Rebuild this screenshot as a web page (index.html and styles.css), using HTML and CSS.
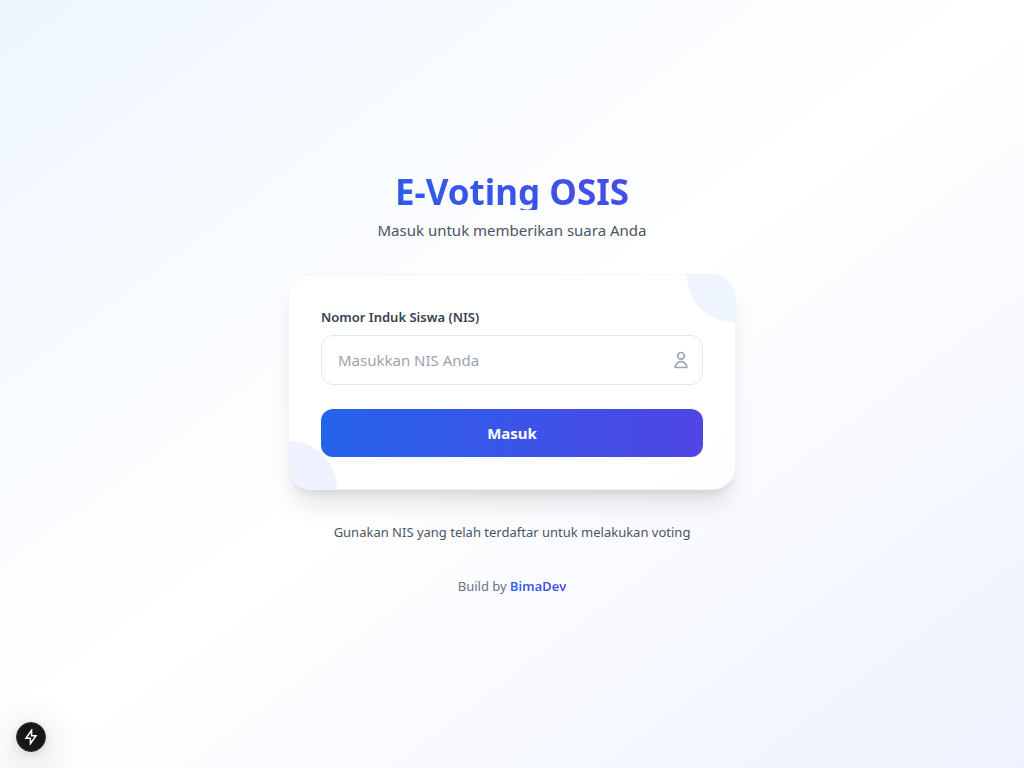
FILE: index.html
```html
<!DOCTYPE html>
<html lang="id">
<head>
<meta charset="utf-8">
<meta name="viewport" content="width=device-width, initial-scale=1">
<title>E-Voting OSIS</title>
<link rel="stylesheet" href="styles.css">
</head>
<body>
<main class="page">
  <div class="login">
    <header class="intro">
      <h1 class="title gradient-text">E-Voting OSIS</h1>
      <p class="subtitle">Masuk untuk memberikan suara Anda</p>
    </header>
    <section class="card">
      <span class="blob blob-top"></span>
      <span class="blob blob-bottom"></span>
      <form class="form">
        <div class="field">
          <label class="label" for="nis">Nomor Induk Siswa (NIS)</label>
          <div class="input-wrap">
            <input class="input" id="nis" type="text" placeholder="Masukkan NIS Anda">
            <svg class="input-icon" viewBox="0 0 24 24" fill="none" stroke="currentColor" stroke-width="2" stroke-linecap="round" stroke-linejoin="round" aria-hidden="true"><path d="M16 7a4 4 0 11-8 0 4 4 0 018 0zM12 14a7 7 0 00-7 7h14a7 7 0 00-7-7z"/></svg>
          </div>
        </div>
        <button class="submit" type="button">Masuk</button>
      </form>
    </section>
    <p class="hint">Gunakan NIS yang telah terdaftar untuk melakukan voting</p>
    <footer class="credit">Build by <a class="credit-link gradient-text" href="#">BimaDev</a></footer>
  </div>
</main>
<button class="dev-button" type="button" aria-label="Route info">
  <svg class="dev-icon" viewBox="0 0 16 16" fill="none" stroke="#fff" stroke-width="1.5" stroke-linejoin="miter" aria-hidden="true"><path d="M8.6 1.2L3 9.2H7.4V14.8L13 6.8H8.6Z"/></svg>
</button>
</body>
</html>
```

FILE: styles.css
```css
*, *::before, *::after { box-sizing: border-box; }
body {
  margin: 0;
  font-family: "Noto Sans", "Open Sans", sans-serif;
  font-size: 15px;
  line-height: 24px;
  color: #4b5563;
}
h1, p { margin: 0; }
button, input { font: inherit; }
.page {
  min-height: 100vh;
  display: flex;
  align-items: center;
  justify-content: center;
  padding: 16px;
  background: linear-gradient(to bottom right, #eff6ff, #ffffff, #eef2ff);
}
.login { width: 100%; max-width: 448px; text-align: center; }
.intro { margin-bottom: 32px; }
.gradient-text {
  background: linear-gradient(to right, #2563eb, #4f46e5);
  background-clip: text;
  -webkit-background-clip: text;
  color: transparent;
}
.title {
  margin-bottom: 8px;
  padding-top: 4px;
  font-size: 35px;
  line-height: 36px;
  font-weight: 700;
}
.card {
  position: relative;
  overflow: hidden;
  padding: 32px;
  border: 1px solid #f3f4f6;
  border-radius: 24px;
  background: rgba(255, 255, 255, 0.8);
  box-shadow: 0 20px 25px -5px rgba(0, 0, 0, 0.1), 0 8px 10px -6px rgba(0, 0, 0, 0.1);
}
.blob {
  position: absolute;
  width: 96px;
  height: 96px;
  border-radius: 50%;
}
.blob-top { top: -48px; right: -48px; background: #eff6ff; }
.blob-bottom { bottom: -48px; left: -48px; background: #eef2ff; }
.form {
  position: relative;
  display: flex;
  flex-direction: column;
  gap: 24px;
  text-align: left;
}
.field { display: flex; flex-direction: column; gap: 8px; }
.label { font-size: 13px; line-height: 20px; font-weight: 600; color: #374151; }
.input-wrap { position: relative; display: flex; }
.input {
  width: 100%;
  height: 50px;
  padding: 12px 48px 12px 16px;
  border: 1px solid #e5e7eb;
  border-radius: 12px;
  background: rgba(255, 255, 255, 0.5);
  color: #111827;
}
.input::placeholder { color: #9ca3af; opacity: 1; }
.input-icon {
  position: absolute;
  top: 15px;
  right: 12px;
  width: 20px;
  height: 20px;
  color: #9ca3af;
  pointer-events: none;
}
.submit {
  padding: 12px 16px;
  border: 0;
  border-radius: 12px;
  background: linear-gradient(to right, #2563eb, #4f46e5);
  color: #fff;
  font-weight: 700;
  cursor: pointer;
}
.hint { margin-top: 32px; font-size: 13px; line-height: 20px; }
.credit { margin-top: 32px; font-size: 13px; line-height: 24px; color: #6b7280; }
.credit-link { font-weight: 600; text-decoration: none; }
.dev-button {
  position: fixed;
  left: 16px;
  bottom: 16px;
  display: flex;
  align-items: center;
  justify-content: center;
  width: 30px;
  height: 30px;
  padding: 0;
  border: 1px solid #343434;
  border-radius: 50%;
  background: #17171a;
  box-shadow: 0 11px 40px rgba(0, 0, 0, 0.25), 0 2px 10px rgba(0, 0, 0, 0.12);
}
.dev-icon { width: 16px; height: 16px; }
```
